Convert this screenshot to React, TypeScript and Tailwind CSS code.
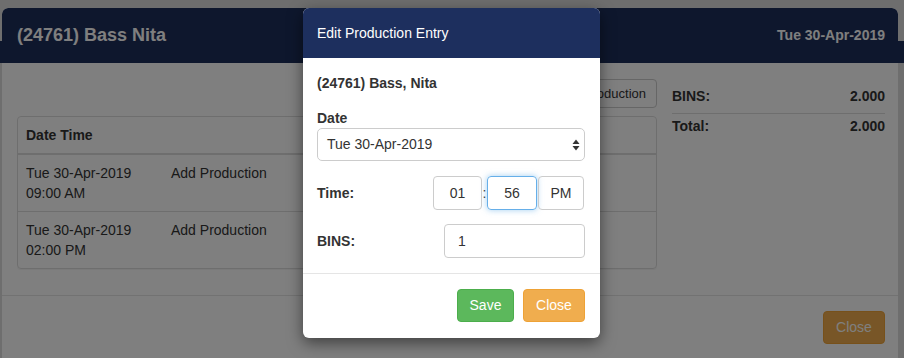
// Stacked modals: production history behind, edit entry dialog on top.
import React from "react"

const font = { fontFamily: '"Liberation Sans", Arial, sans-serif' }

function SelectArrows() {
  return (
    <svg width="8" height="12" viewBox="0 0 8 12" className="text-[#333]">
      <path d="M4 0.5 L7.5 5 L0.5 5 Z" fill="currentColor" />
      <path d="M4 11.5 L7.5 7 L0.5 7 Z" fill="currentColor" />
    </svg>
  )
}

function HistoryModal() {
  const rows = [
    { date: "Tue 30-Apr-2019", time: "09:00 AM", action: "Add Production" },
    { date: "Tue 30-Apr-2019", time: "02:00 PM", action: "Add Production" },
  ]
  return (
    <div className="absolute left-[2px] top-[8px] w-[896px] h-[362px] bg-white rounded-t-[6px] overflow-hidden text-[14px] text-[#333]">
      <div className="h-[55px] bg-[#1c2e5a] flex items-center justify-between pl-[15px] pr-[13px] rounded-t-[6px]">
        <h2 className="text-[18px] font-bold text-white">(24761) Bass Nita</h2>
        <span className="text-[14px] font-bold text-white">Tue 30-Apr-2019</span>
      </div>

      <div className="flex gap-[15px] pl-[15px] pr-[13px] h-[232px]">
        <div className="w-[640px] pt-[16px]">
          <div className="flex justify-end">
            <button className="h-[29px] px-[10px] border border-[#ccc] rounded-[4px] text-[13px] bg-white">
              Add Production
            </button>
          </div>
          <div className="mt-[8px] border border-[#ddd] rounded-[4px] shadow-[0_1px_1px_rgba(0,0,0,0.05)]">
            <div className="flex h-[38px] items-center px-[8px] border-b-2 border-[#ddd] font-bold">
              Date Time
            </div>
            {rows.map((r, i) => (
              <div key={i} className={`flex py-[8px] leading-[20px] ${i > 0 ? "border-t border-[#ddd]" : ""}`}>
                <div className="w-[145px] px-[8px]">
                  <div>{r.date}</div>
                  <div>{r.time}</div>
                </div>
                <div className="px-[8px]">{r.action}</div>
              </div>
            ))}
          </div>
        </div>

        <div className="flex-1 pt-[16px]">
          <div className="flex justify-between items-center h-[35px] border-b border-[#ddd] font-bold">
            <span>BINS:</span>
            <span>2.000</span>
          </div>
          <div className="flex justify-between items-center h-[24px] font-bold">
            <span>Total:</span>
            <span>2.000</span>
          </div>
        </div>
      </div>

      <div className="border-t border-[#e5e5e5] flex justify-end pt-[15px] pr-[13px]">
        <button className="h-[33px] w-[62px] rounded-[4px] bg-[#f0ad4e] border border-[#eea236] text-white">
          Close
        </button>
      </div>
    </div>
  )
}

function EditModal() {
  return (
    <div className="absolute left-[303px] top-[8px] w-[297px] h-[330px] bg-white rounded-[6px] overflow-hidden shadow-[0_5px_15px_rgba(0,0,0,0.5)] text-[14px] text-[#333]">
      <div className="h-[50px] bg-[#1d2f5e] flex items-center px-[14px] text-white">
        Edit Production Entry
      </div>

      <div className="px-[14px] pr-[15px] pt-[15px] pb-[15px]">
        <div className="font-bold leading-[20px]">(24761) Bass, Nita</div>

        <div className="mt-[15px] font-bold leading-[20px]">Date</div>
        <div className="h-[33px] border border-[#ccc] rounded-[5px] flex items-center justify-between pl-[9px] pr-[4px]">
          <span>Tue 30-Apr-2019</span>
          <SelectArrows />
        </div>

        <div className="mt-[15px] flex items-center justify-between h-[34px]">
          <span className="font-bold">Time:</span>
          <div className="flex items-center pr-[1px]">
            <div className="w-[49px] h-[34px] border border-[#ccc] rounded-[4px] flex items-center justify-center">01</div>
            <span className="w-[5px] text-center">:</span>
            <div className="w-[50px] h-[34px] border border-[#66afe9] rounded-[4px] flex items-center justify-center shadow-[0_0_6px_rgba(102,175,233,0.6)]">56</div>
            <div className="ml-[1px] w-[46px] h-[34px] border border-[#ccc] rounded-[4px] flex items-center justify-center">PM</div>
          </div>
        </div>

        <div className="mt-[14px] flex items-center justify-between h-[34px]">
          <span className="font-bold">BINS:</span>
          <div className="w-[141px] h-[34px] border border-[#ccc] rounded-[4px] flex items-center pl-[13px]">1</div>
        </div>
      </div>

      <div className="border-t border-[#e5e5e5] flex justify-end gap-[9px] pt-[15px] pr-[15px]">
        <button className="h-[33px] w-[57px] rounded-[4px] bg-[#5cb85c] border border-[#4cae4c] text-white">
          Save
        </button>
        <button className="h-[33px] w-[62px] rounded-[4px] bg-[#f0ad4e] border border-[#eea236] text-white">
          Close
        </button>
      </div>
    </div>
  )
}

export default function App() {
  return (
    <div className="relative w-[904px] h-[358px] overflow-hidden bg-[#dcdcdc]" style={font}>
      <div className="h-[41px]" />
      <div className="h-[22px] bg-[#1c2e5a]" />
      <HistoryModal />
      <div className="absolute inset-0 bg-black/50" />
      <EditModal />
    </div>
  )
}
